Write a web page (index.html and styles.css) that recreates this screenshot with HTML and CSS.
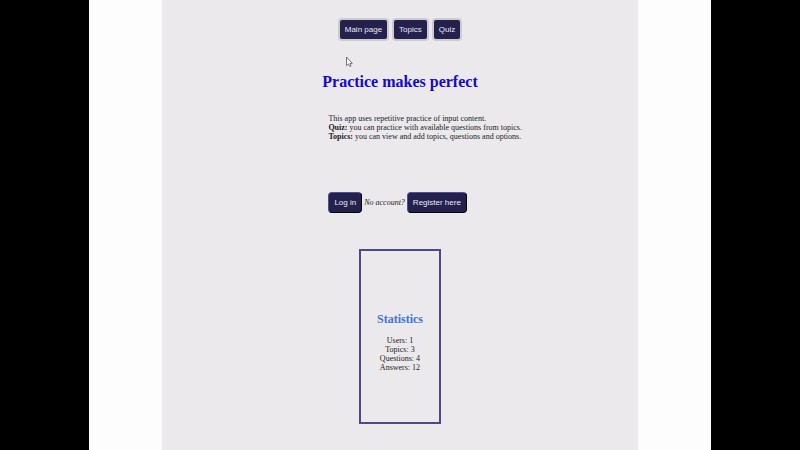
FILE: index.html
```
<!DOCTYPE html>
<html lang="en">
<head>
<meta charset="utf-8">
<title>Practice makes perfect</title>
<link rel="stylesheet" href="styles.css">
</head>
<body>
<div class="screen">
  <div class="page">
    <nav class="nav">
      <button class="btn nav-btn" type="button">Main page</button>
      <button class="btn nav-btn" type="button">Topics</button>
      <button class="btn nav-btn" type="button">Quiz</button>
    </nav>
    <main>
      <h1 class="title">Practice makes perfect</h1>
      <div class="content">
        <p class="intro">This app uses repetitive practice of input content.<br>
        <b>Quiz:</b> you can practice with available questions from topics.<br>
        <b>Topics:</b> you can view and add topics, questions and options.</p>
        <div class="account">
          <button class="btn" type="button">Log in</button>
          <i>No account?</i>
          <button class="btn" type="button">Register here</button>
        </div>
      </div>
      <section class="stats">
        <h2 class="stats-title">Statistics</h2>
        <p>Users: 1<br>Topics: 3<br>Questions: 4<br>Answers: 12</p>
      </section>
    </main>
  </div>
</div>
<svg class="cursor" width="8" height="12" viewBox="0 0 8 12" aria-hidden="true">
  <path d="M1.5 1v8.6l2-1.7 1.2 2.6 1.4-.6-1.2-2.5h2.4z" fill="#fff" stroke="#55555c" stroke-width=".8"/>
</svg>
</body>
</html>
```
FILE: styles.css
```
* {
  box-sizing: border-box;
}

body {
  margin: 0;
  background: #000;
  color: #222226;
  font: 8px/9px "Liberation Serif", "Times New Roman", serif;
}

p {
  margin: 0;
}

.screen {
  display: flex;
  justify-content: center;
  width: 77.75%;
  min-height: 100vh;
  margin: 0 auto;
  background: #fefdfe;
}

.page {
  width: 76.4%;
  padding-top: 18px;
  background: #ebe9eb;
}

.nav {
  display: flex;
  justify-content: center;
  gap: 3px;
}

.btn {
  padding: 5px;
  border: 1px outset #24213f;
  border-radius: 4px;
  background: #25214f;
  color: #e9e8f2;
  font: 8px/9px "Liberation Sans", Arial, sans-serif;
}

.nav-btn {
  padding: 5px;
  border: 2px solid #cdcbcf;
}

.title {
  margin: 31px 0 0;
  color: #1508d0;
  font-size: 16px;
  line-height: 20px;
  text-align: center;
}

.content {
  padding-left: 166px;
}

.intro {
  margin-top: 22px;
}

.account {
  display: flex;
  align-items: center;
  gap: 2px;
  margin-top: 51px;
}

.stats {
  display: flex;
  flex-direction: column;
  align-items: center;
  justify-content: center;
  width: 82px;
  min-height: 175px;
  margin: 36px auto 0;
  border: 2px solid #4d4889;
  text-align: center;
}

.stats-title {
  margin: 10px 0;
  color: #4272dc;
  font-size: 12px;
  line-height: 14px;
}

.cursor {
  position: absolute;
  top: 56px;
  left: 345px;
}
```
